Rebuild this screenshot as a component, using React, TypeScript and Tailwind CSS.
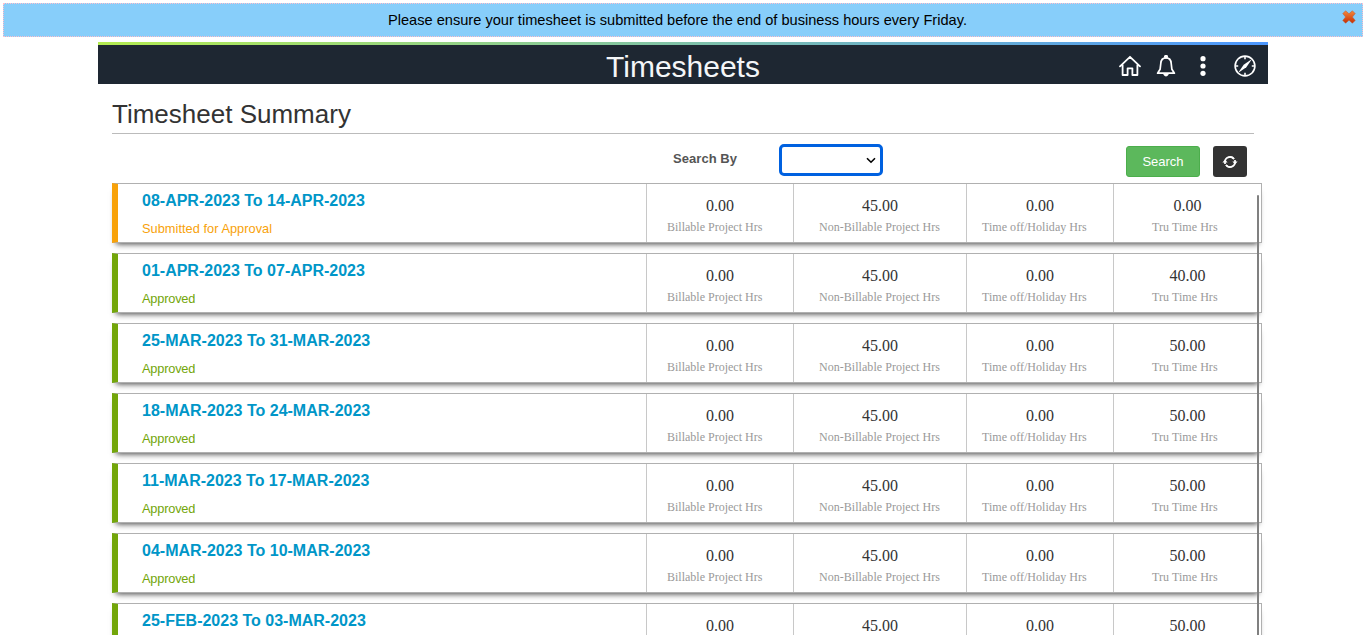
import React from "react";

type Row = { range: string; submitted?: boolean; tru: string };

const rows: Row[] = [
  { range: "08-APR-2023 To 14-APR-2023", submitted: true, tru: "0.00" },
  { range: "01-APR-2023 To 07-APR-2023", tru: "40.00" },
  { range: "25-MAR-2023 To 31-MAR-2023", tru: "50.00" },
  { range: "18-MAR-2023 To 24-MAR-2023", tru: "50.00" },
  { range: "11-MAR-2023 To 17-MAR-2023", tru: "50.00" },
  { range: "04-MAR-2023 To 10-MAR-2023", tru: "50.00" },
  { range: "25-FEB-2023 To 03-MAR-2023", tru: "50.00" },
];

function Cell({ value, label, className }: { value: string; label: string; className: string }) {
  return (
    <div className={`shrink-0 border-l border-[#c8c8c8] pt-[12px] font-['Liberation_Serif',serif] ${className}`}>
      <div className="text-center text-[16px] leading-[20px] text-[#333]">{value}</div>
      <div className="mt-[2px] whitespace-nowrap text-[12px] leading-[18px] text-[#999]">{label}</div>
    </div>
  );
}

function TimesheetRow({ row }: { row: Row }) {
  return (
    <div
      className={`flex h-[60px] w-[1150px] shrink-0 border border-l-[6px] border-[#b0b0b0] bg-white shadow-[0_5px_6px_-4px_rgba(0,0,0,0.75)] ${
        row.submitted ? "border-l-[#f8a20a]" : "border-l-[#73a60a]"
      }`}
    >
      <div className="flex-1 pl-[24px]">
        <div className="mt-[7px] text-[16px] font-bold leading-[20px] text-[#0096c8]">{row.range}</div>
        <div className={`mt-[10px] text-[12.8px] leading-[16px] ${row.submitted ? "tracking-[0.03px] text-[#f8a20a]" : "tracking-[-0.2px] text-[#73a60a]"}`}>
          {row.submitted ? "Submitted for Approval" : "Approved"}
        </div>
      </div>
      <Cell value="0.00" label="Billable Project Hrs" className="w-[147px] [&>div:last-child]:pl-[20px]" />
      <Cell value="45.00" label="Non-Billable Project Hrs" className="w-[173px] [&>div:last-child]:pl-[25px] [&>div:last-child]:tracking-[0.04px]" />
      <Cell value="0.00" label="Time off/Holiday Hrs" className="w-[147px] [&>div:last-child]:pl-[15px] [&>div:last-child]:tracking-[0.04px]" />
      <Cell value={row.tru} label="Tru Time Hrs" className="w-[148px] [&>div:last-child]:pl-[38px] [&>div:last-child]:tracking-[0.06px]" />
    </div>
  );
}

export default function App() {
  return (
    <div className="flex h-[635px] w-full flex-col overflow-hidden bg-white p-[3px] pb-0 font-['Liberation_Sans',Arial,sans-serif]">
      <div className="relative flex h-[34px] shrink-0 items-center justify-center border border-dotted border-[#ffc0cb] bg-[#87cefa] text-[14.6px] text-black">
        <span className="pr-[11px] pt-[2px]">Please ensure your timesheet is submitted before the end of business hours every Friday.</span>
        <svg className="absolute right-[6px] top-[6px]" width="14" height="14" viewBox="0 0 14 14">
          <defs>
            <linearGradient id="close" x1="0" y1="0" x2="0" y2="1">
              <stop offset="0" stopColor="#f58a3c" />
              <stop offset="1" stopColor="#c42c04" />
            </linearGradient>
          </defs>
          <path d="M3.6 .8 7 3.8 10.4.8 13.2 3.6 10.4 7 13.2 10.4 10.4 13.2 7 10.2 3.6 13.2.8 10.4 3.6 7 .8 3.6Z" fill="url(#close)" stroke="#c0603c" strokeWidth=".6" strokeLinejoin="round" />
        </svg>
      </div>

      <div className="mx-auto mt-[5px] flex w-[1170px] min-h-0 flex-1 flex-col">
        <div className="h-[3px] shrink-0 bg-linear-to-r/srgb from-[#b4ec51] to-[#4c97ff]" />
        <header className="grid h-[39px] shrink-0 grid-cols-[1fr_auto_1fr] items-center bg-[#1e2732] text-white">
          <span />
          <h1 className="pt-[4px] text-[30px] leading-[35px] text-[#f4f6f8]">Timesheets</h1>
          <div className="flex items-center justify-end pr-[12px] pt-[3px]">
            <svg width="22" height="22" viewBox="0 0 22 22" fill="none" stroke="white" strokeWidth="1.8" strokeLinejoin="round" strokeLinecap="round">
              <path d="M1 11.3 11 1.8 21 11.3M3.6 9.8V20H8.6V13.3H13.4V20H18.4V9.8" />
            </svg>
            <svg className="ml-[14px]" width="22" height="22" viewBox="0 0 22 22" fill="none" stroke="white" strokeWidth="1.7" strokeLinejoin="round">
              <path d="M2.6 18.2 5.1 14.3 5.8 8.5C6 5 8 2.9 11 2.9S16 5 16.2 8.5L16.9 14.3 19.4 18.2Z" />
              <circle cx="11" cy="1.8" r="1.2" fill="white" />
              <path d="M9.2 19.3Q11 22 12.8 19.3Z" fill="white" />
            </svg>
            <svg className="ml-[15px]" width="22" height="22" viewBox="0 0 22 22" fill="white">
              <circle cx="11" cy="3.7" r="2.6" />
              <circle cx="11" cy="11" r="2.6" />
              <circle cx="11" cy="18.3" r="2.6" />
            </svg>
            <svg className="ml-[20px]" width="22" height="22" viewBox="0 0 22 22" fill="none" stroke="white" strokeWidth="1.6">
              <circle cx="11" cy="11" r="9.9" />
              <path d="M18 4 12.3 12.3 4 18 9.7 9.7Z" fill="white" stroke="none" />
              <path d="M11 2V4.2M11 17.8V20M2 11H4.2M17.8 11H20" />
            </svg>
          </div>
        </header>

        <main className="relative flex min-h-0 flex-1 flex-col pl-[14px]">
          <h2 className="mr-[14px] h-[50px] shrink-0 border-b border-[#bbb] pt-[15px] text-[26px] leading-[30px] text-[#333]">Timesheet Summary</h2>
          <div className="flex h-[49px] shrink-0 items-start pt-[10px]">
            <label className="ml-[561px] mt-[7px] w-[106px] text-[13px] font-bold leading-[16px] tracking-[0.05px] text-[#555]">Search By</label>
            <div className="flex h-[32px] w-[104px] items-center justify-end rounded-[5px] border-[3px] border-[#0061e0] pr-[4px]">
              <svg width="10" height="7" viewBox="0 0 10 7" fill="none" stroke="black" strokeWidth="1.6"><path d="M1 1.2 5 5.2 9 1.2" /></svg>
            </div>
            <button className="ml-[243px] mt-[2px] h-[31px] w-[74px] rounded-[3px] border border-[#4cae4c] bg-[#5cb85c] text-[13px] text-white">Search</button>
            <button className="ml-[13px] mt-[2px] flex h-[31px] w-[34px] items-center justify-center rounded-[3px] bg-[#333]">
              <svg width="16" height="14" viewBox="0 0 16 14" fill="none" stroke="white" strokeWidth="1.7">
                <path d="M3 9V7A5 5 0 0 1 12 4M13 5V7A5 5 0 0 1 4 10" />
                <path d="M.4 7.6 3 4.6 5.6 7.6ZM10.4 6.6 13 9.6 15.6 6.6Z" fill="white" stroke="none" />
                <path d="M5.2 2.9A5 5 0 0 1 12 4M10.8 11.1A5 5 0 0 1 4 10" />
              </svg>
            </button>
          </div>
          <div className="flex min-h-0 flex-1 flex-col gap-[10px]">
            {rows.map((row) => <TimesheetRow key={row.range} row={row} />)}
          </div>
          <div className="absolute bottom-0 right-[9px] top-[111px] w-[2px] rounded-t bg-[#808080]" />
        </main>
      </div>
    </div>
  );
}
